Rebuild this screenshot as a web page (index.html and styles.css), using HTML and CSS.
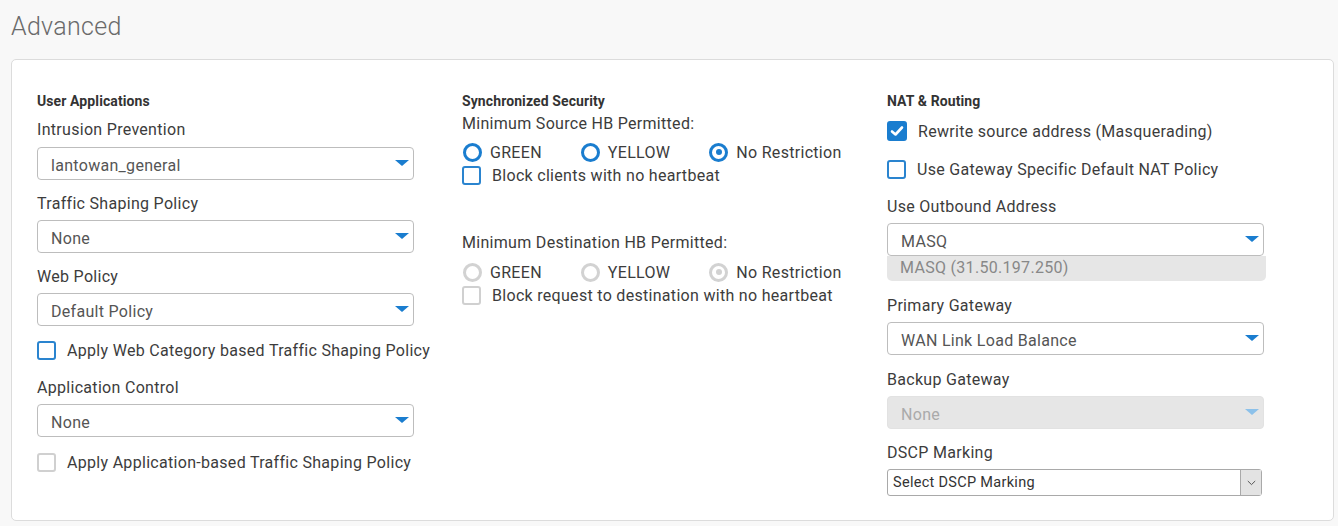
FILE: index.html
```html
<!DOCTYPE html>
<html lang="en">
<head>
  <meta charset="UTF-8">
  <title>Advanced</title>
  <link rel="stylesheet" href="styles.css">
</head>
<body>

  <h1 class="page-title">Advanced</h1>

  <div class="card">

    <div class="col">
      <div class="section-title">User Applications</div>

      <div class="field-label first">Intrusion Prevention</div>
      <div class="select"><span>lantowan_general</span><i class="arrow"></i></div>

      <div class="field-label">Traffic Shaping Policy</div>
      <div class="select"><span>None</span><i class="arrow"></i></div>

      <div class="field-label">Web Policy</div>
      <div class="select"><span>Default Policy</span><i class="arrow"></i></div>

      <label class="check-row web-check">
        <span class="box"></span>
        Apply Web Category based Traffic Shaping Policy
      </label>

      <div class="field-label app-label">Application Control</div>
      <div class="select"><span>None</span><i class="arrow"></i></div>

      <label class="check-row app-check">
        <span class="box disabled"></span>
        Apply Application-based Traffic Shaping Policy
      </label>
    </div>

    <div class="col">
      <div class="section-title">Synchronized Security</div>

      <div class="field-label tight">Minimum Source HB Permitted:</div>
      <div class="radio-row">
        <span class="radio-item"><span class="radio"></span>GREEN</span>
        <span class="radio-item"><span class="radio"></span>YELLOW</span>
        <span class="radio-item"><span class="radio checked"></span>No Restriction</span>
      </div>
      <label class="check-row hb-check">
        <span class="box"></span>
        Block clients with no heartbeat
      </label>

      <div class="field-label dest-label">Minimum Destination HB Permitted:</div>
      <div class="radio-row">
        <span class="radio-item"><span class="radio disabled"></span>GREEN</span>
        <span class="radio-item"><span class="radio disabled"></span>YELLOW</span>
        <span class="radio-item"><span class="radio checked disabled"></span>No Restriction</span>
      </div>
      <label class="check-row hb-check">
        <span class="box disabled"></span>
        Block request to destination with no heartbeat
      </label>
    </div>

    <div class="col col-nat">
      <div class="section-title">NAT &amp; Routing</div>

      <label class="check-row nat-first">
        <span class="box checked">
          <svg width="14" height="12" viewBox="0 0 14 12"><path d="M2 6.5 L5.5 9.5 L12 2.5" fill="none" stroke="#fff" stroke-width="2.6" stroke-linecap="round" stroke-linejoin="round"/></svg>
        </span>
        Rewrite source address (Masquerading)
      </label>

      <label class="check-row nat-second">
        <span class="box"></span>
        Use Gateway Specific Default NAT Policy
      </label>

      <div class="field-label outbound-label">Use Outbound Address</div>
      <div class="select"><span>MASQ</span><i class="arrow"></i></div>
      <div class="select-note">MASQ (31.50.197.250)</div>

      <div class="field-label">Primary Gateway</div>
      <div class="select"><span>WAN Link Load Balance</span><i class="arrow"></i></div>

      <div class="field-label">Backup Gateway</div>
      <div class="select disabled"><span>None</span><i class="arrow"></i></div>

      <div class="field-label dscp-label">DSCP Marking</div>
      <div class="native-select">
        <span>Select DSCP Marking</span>
        <span class="native-btn">
          <svg width="9" height="6" viewBox="0 0 9 6"><path d="M0.8 1 L4.5 4.6 L8.2 1" fill="none" stroke="#555" stroke-width="1"/></svg>
        </span>
      </div>
    </div>

  </div>

</body>
</html>
```

FILE: styles.css
```css
* {
  box-sizing: border-box;
}

body {
  margin: 0;
  padding: 0;
  background: #f8f8f8;
  font-family: Roboto, "Liberation Sans", sans-serif;
  color: #3c3c3c;
  letter-spacing: 0.3px;
  width: 1338px;
  height: 526px;
  overflow: hidden;
}

.page-title {
  margin: 0;
  padding: 12px 0 0 11px;
  height: 59px;
  font-size: 25px;
  font-weight: 300;
  color: #6a6a6a;
  line-height: 30px;
}

.card {
  margin: 0 4px 0 11px;
  height: 462px;
  background: #fff;
  border: 1px solid #dcdcdc;
  border-radius: 5px;
  padding: 33px 0 0 25px;
  display: grid;
  grid-template-columns: 425px 425px 1fr;
}

.section-title {
  font-size: 14px;
  font-weight: 700;
  line-height: 16px;
  letter-spacing: 0.1px;
  color: #333;
}

.field-label {
  font-size: 16px;
  line-height: 20px;
  margin-top: 14px;
  margin-bottom: 6px;
  color: #3c3c3c;
}

.field-label.first {
  margin-top: 11px;
  margin-bottom: 7px;
}

.field-label.tight {
  margin-top: 5px;
  margin-bottom: 8px;
}

.field-label.app-label {
  margin-top: 18px;
}

.field-label.dest-label {
  margin-top: 48px;
  margin-bottom: 9px;
}

.col-nat .field-label {
  margin-top: 15px;
  margin-bottom: 6px;
}

.col-nat .field-label.outbound-label {
  margin-top: 18px;
  margin-bottom: 6px;
}

.col-nat .field-label.dscp-label {
  margin-top: 14px;
  margin-bottom: 6px;
}

.select {
  position: relative;
  width: 377px;
  height: 33px;
  border: 1px solid #bdbdbd;
  border-radius: 4px;
  background: #fff;
  padding: 7px 0 0 13px;
  font-size: 16px;
  line-height: 22px;
  color: #555;
}

.select .arrow {
  position: absolute;
  right: 4px;
  top: 12px;
  width: 0;
  height: 0;
  border-left: 7px solid transparent;
  border-right: 7px solid transparent;
  border-top: 6px solid #1a7dcf;
}

.select.disabled {
  background: #e6e6e6;
  border-color: #e2e2e2;
  color: #aaa;
}

.select.disabled .arrow {
  border-top-color: #8cc1ea;
}

.select-note {
  width: 379px;
  height: 25px;
  background: #e6e6e6;
  border-radius: 0 0 5px 5px;
  padding: 2px 0 0 13px;
  font-size: 16px;
  line-height: 20px;
  color: #888;
}

.check-row {
  display: flex;
  align-items: center;
  height: 20px;
  font-size: 16px;
  color: #3c3c3c;
  white-space: nowrap;
}

.box {
  width: 19px;
  height: 19px;
  margin-right: 11px;
  border: 2px solid #2a84cf;
  border-radius: 3px;
  flex-shrink: 0;
  display: flex;
  align-items: center;
  justify-content: center;
}

.box.disabled {
  border-color: #d0d0d0;
}

.box.checked {
  width: 20px;
  height: 20px;
  background: #1a7dcf;
  border-color: #1a7dcf;
}

.web-check {
  margin-top: 14px;
}

.app-check {
  margin-top: 15px;
}

.hb-check {
  margin-top: 3px;
}

.nat-first {
  margin-top: 12px;
}

.nat-second {
  margin-top: 18px;
}

.radio-row {
  display: flex;
  align-items: center;
  height: 20px;
  font-size: 16px;
}

.radio-item {
  display: flex;
  align-items: center;
  margin-right: 38px;
}

.radio {
  width: 19px;
  height: 19px;
  margin: 0 8px 0 1px;
  border: 3px solid #1a7dcf;
  border-radius: 50%;
  display: flex;
  align-items: center;
  justify-content: center;
}

.radio.checked::after {
  content: "";
  width: 6px;
  height: 6px;
  border-radius: 50%;
  background: #1a7dcf;
}

.radio.disabled {
  border-color: #d2d2d2;
}

.radio.disabled.checked::after {
  background: #d2d2d2;
}

.native-select {
  display: flex;
  align-items: stretch;
  width: 375px;
  height: 27px;
  border: 1px solid #a9a9a9;
  border-radius: 3px;
  font-size: 14.5px;
  color: #333;
}

.native-select span:first-child {
  flex: 1;
  padding: 4px 0 0 5px;
}

.native-btn {
  width: 21px;
  background: #e3e3e3;
  border-left: 1px solid #a9a9a9;
  display: flex;
  align-items: center;
  justify-content: center;
}
```
